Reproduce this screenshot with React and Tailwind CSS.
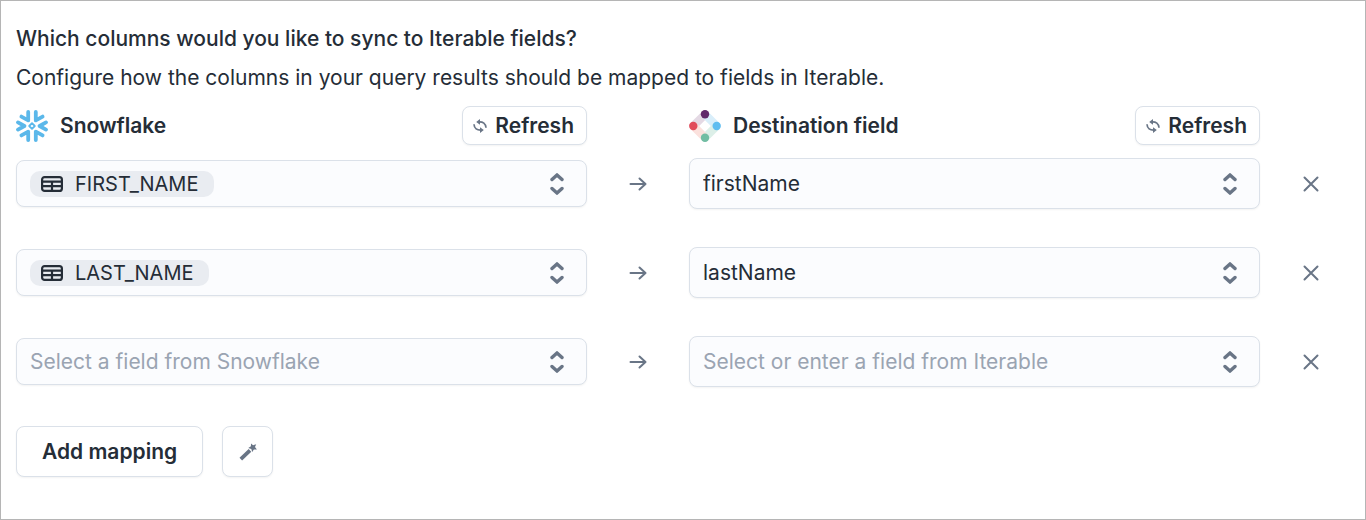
import React, { useState } from 'react';

const columns = ['FIRST_NAME', 'LAST_NAME', 'EMAIL'];
const fields = ['firstName', 'lastName', 'email'];

function SnowflakeLogo() {
  return (
    <svg viewBox="0 0 32 32" className="h-8 w-8" fill="none" stroke="#5bb8ea" strokeWidth="3.8" strokeLinecap="round" strokeLinejoin="round" aria-hidden="true">
      <path d="M12.2 2v8.4L5.4 6.6M19.8 2v8.4l6.8-3.8" />
      <path d="M12.2 30v-8.4l-6.8 3.8M19.8 30v-8.4l6.8 3.8" />
      <path d="M2 12.4 8.4 16 2 19.6M30 12.4 23.6 16l6.4 3.6" />
      <path d="M16 13.2 18.8 16 16 18.8 13.2 16z" strokeWidth="1.8" />
    </svg>
  );
}

function IterableLogo() {
  return (
    <svg viewBox="0 0 32 32" className="h-8 w-8" aria-hidden="true">
      <g strokeWidth="8.2">
        <path d="M4.3 16 16 4.3" stroke="#e4d9e4" />
        <path d="M16 4.3 27.7 16" stroke="#d9eefa" />
        <path d="M27.7 16 16 27.7" stroke="#dcefe8" />
        <path d="M16 27.7 4.3 16" stroke="#fbe1dd" />
      </g>
      <circle cx="16" cy="4.3" r="4.2" fill="#61296b" />
      <circle cx="27.7" cy="16" r="4.2" fill="#5fbdf0" />
      <circle cx="16" cy="27.7" r="4.2" fill="#72bda3" />
      <circle cx="4.3" cy="16" r="4.2" fill="#e14b5b" />
    </svg>
  );
}

function RefreshIcon() {
  return (
    <svg viewBox="0 0 14 14" className="h-3.5 w-3.5" fill="none" stroke="#697586" strokeWidth="1.7" aria-hidden="true">
      <path d="M5.5 2.9C10 2.5 12.8 4.700 13 8.800" />
      <path d="M8.500 11.100C4 11.500 1.200 9.300 1 5.200" />
      <path d="M7 0v5.800L3.200 2.900zM7 14V8.200l3.800 2.900z" fill="#697586" stroke="none" />
    </svg>
  );
}

function TableIcon() {
  return (
    <svg viewBox="0 0 22 16" className="h-4 w-[22px]" fill="none" stroke="#252d37" strokeWidth="2.2" aria-hidden="true">
      <rect x="1.1" y="1.1" width="19.8" height="13.8" rx="2.5" />
      <path d="M1 5.6h20M1 10.2h20M11 5.6V15" />
    </svg>
  );
}

function Chevrons() {
  return (
    <svg viewBox="0 0 14 24" className="pointer-events-none h-6 w-3.5" fill="none" stroke="#697586" strokeWidth="3.4" strokeLinecap="round" strokeLinejoin="round" aria-hidden="true">
      <path d="M2 7.5l5-4.6 5 4.6M2 16.5l5 4.6 5-4.6" />
    </svg>
  );
}

function ArrowIcon() {
  return (
    <svg viewBox="0 0 18 14" className="h-3.5 w-[18px]" fill="none" stroke="#697586" strokeWidth="2" strokeLinecap="round" strokeLinejoin="round" aria-hidden="true">
      <path d="M1.5 7H16.500M10.500 1.500L16.500 7l-6 5.500" />
    </svg>
  );
}

function CloseIcon() {
  return (
    <svg viewBox="0 0 16 16" className="h-4 w-4" fill="none" stroke="#697586" strokeWidth="2" strokeLinecap="round" aria-hidden="true">
      <path d="M1.5 1.5l13 13M14.5 1.5l-13 13" />
    </svg>
  );
}

function WandIcon() {
  return (
    <svg viewBox="0 0 18 18" className="h-[18px] w-[18px]" fill="#697586" aria-hidden="true">
      <path d="M1.8 16.2 11 7.4" stroke="#697586" strokeWidth="3.8" />
      <path d="M12 0.4 14.1 2.2 17.2 1.2 16 4.1 17.9 6.6 14.9 6.5 13.2 9 12.3 6 9.3 5 11.9 3.3z" />
    </svg>
  );
}

function ColumnHeader({ logo, title }) {
  return (
    <div className="flex items-center justify-between">
      <div className="flex items-center gap-3">
        {logo}
        <h2 className="text-[21px] leading-6 font-semibold">{title}</h2>
      </div>
      <button
        type="button"
        className="flex h-[39px] items-center gap-2 rounded-lg border border-[#dbe1e9] bg-white pr-3 pl-2.5 text-[21px] leading-6 font-semibold shadow-xs">
        <RefreshIcon />
        Refresh
      </button>
    </div>
  );
}

function ColumnSelect({ value, onChange, label }) {
  return (
    <div className="flex h-[47px] items-center justify-between rounded-lg border border-[#dbe1e9] bg-[#fbfcfe] pr-[22px] pl-[13px] shadow-xs">
      {value ? (
        <span className="flex h-[26px] items-center gap-3 rounded-[10px] bg-[#e9ecf1] pr-4 pl-[11px]">
          <TableIcon />
          <select
            aria-label={label}
            value={value}
            onChange={onChange}
            className="field-sizing-content appearance-none bg-transparent text-[20px] leading-6 outline-none">
            {columns.map((c) => (
              <option key={c}>{c}</option>
            ))}
          </select>
        </span>
      ) : (
        <select
          aria-label={label}
          value=""
          onChange={onChange}
          className="min-w-0 flex-1 appearance-none bg-transparent text-[21px] leading-6 text-[#9aa4b2] outline-none">
          <option value="">Select a field from Snowflake</option>
          {columns.map((c) => (
            <option key={c}>{c}</option>
          ))}
        </select>
      )}
      <Chevrons />
    </div>
  );
}

function FieldSelect({ value, onChange, label }) {
  return (
    <div className="flex h-[51px] items-center rounded-lg border border-[#dbe1e9] bg-[#fbfcfe] pr-[22px] pl-[13px] shadow-xs">
      <select
        aria-label={label}
        value={value}
        onChange={onChange}
        className={
          value
            ? 'min-w-0 flex-1 appearance-none bg-transparent text-[21px] leading-6 outline-none'
            : 'min-w-0 flex-1 appearance-none bg-transparent text-[21px] leading-6 text-[#9aa4b2] outline-none'
        }>
        <option value="">Select or enter a field from Iterable</option>
        {fields.map((f) => (
          <option key={f}>{f}</option>
        ))}
      </select>
      <Chevrons />
    </div>
  );
}

function App() {
  const [mappings, setMappings] = useState([
    { id: 1, from: 'FIRST_NAME', to: 'firstName' },
    { id: 2, from: 'LAST_NAME', to: 'lastName' },
    { id: 3, from: '', to: '' },
  ]);

  const update = (id, key, value) => {
    setMappings(mappings.map((m) => (m.id === id ? { ...m, [key]: value } : m)));
  };

  const addMapping = () => {
    setMappings([...mappings, { id: Date.now(), from: '', to: '' }]);
  };

  return (
    <main className="min-h-screen border border-[#b5b5b5] bg-white pt-[26px] pr-[3px] pb-[41px] pl-[15px] font-['Inter',sans-serif] text-[#252d37]">
      <h1 className="text-[21px] leading-6 font-medium">Which columns would you like to sync to Iterable fields?</h1>
      <p className="mt-[15px] text-[21px] leading-6">
        Configure how the columns in your query results should be mapped to fields in Iterable.
      </p>

      <div className="mt-4 grid grid-cols-[1fr_102px_1fr_102px] items-center">
        <ColumnHeader logo={<SnowflakeLogo />} title="Snowflake" />
        <span />
        <ColumnHeader logo={<IterableLogo />} title="Destination field" />
      </div>

      <div className="mt-[13px] flex flex-col gap-[38px]">
        {mappings.map((m) => (
          <div key={m.id} className="grid grid-cols-[1fr_102px_1fr_102px] items-center">
            <ColumnSelect label="Snowflake column" value={m.from} onChange={(e) => update(m.id, 'from', e.target.value)} />
            <span className="flex justify-center">
              <ArrowIcon />
            </span>
            <FieldSelect label="Iterable field" value={m.to} onChange={(e) => update(m.id, 'to', e.target.value)} />
            <button
              type="button"
              aria-label="Remove mapping"
              onClick={() => setMappings(mappings.filter((x) => x.id !== m.id))}
              className="justify-self-center p-2">
              <CloseIcon />
            </button>
          </div>
        ))}
      </div>

      <div className="mt-[39px] flex gap-[19px]">
        <button
          type="button"
          onClick={addMapping}
          className="h-[51px] rounded-lg border border-[#dbe1e9] bg-white px-[25px] text-[21px] leading-6 font-semibold shadow-xs">
          Add mapping
        </button>
        <button
          type="button"
          aria-label="Suggest mappings"
          className="flex h-[51px] w-[51px] items-center justify-center rounded-lg border border-[#dbe1e9] bg-white shadow-xs">
          <WandIcon />
        </button>
      </div>
    </main>
  );
}

export default App;
